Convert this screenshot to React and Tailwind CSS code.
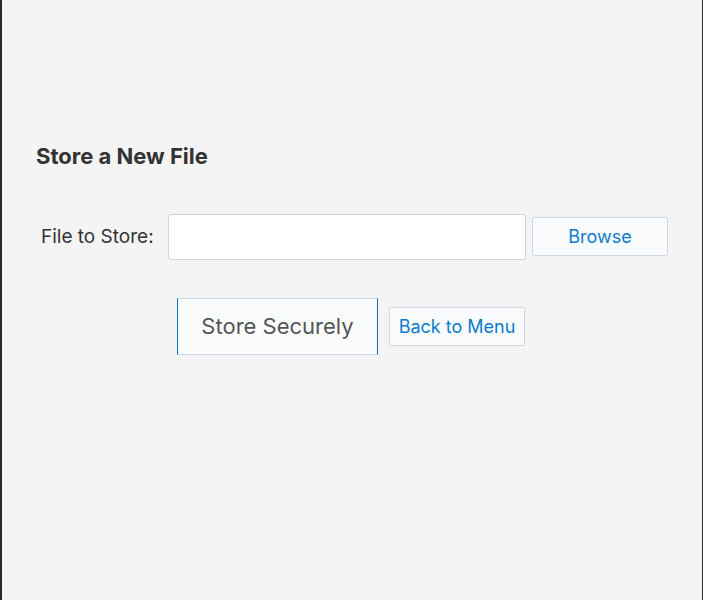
export default function App() {
  const font = { fontFamily: "Inter, 'Noto Sans', sans-serif" };
  return (
    <div
      className="h-[600px] w-[703px] bg-[#f4f4f4] border-l-2 border-r border-[#2b2b2b] flex flex-col"
      style={font}
    >
      <h1 className="mt-[142px] ml-[34px] text-[22px] font-bold text-[#333333] leading-[28px]">
        Store a New File
      </h1>

      <div className="mt-[44px] flex items-center">
        <label className="ml-[39px] w-[127px] text-[19px] text-[#333333]">File to Store:</label>
        <div className="h-[46px] w-[358px] rounded-[3px] border border-[#cdd3e3] bg-white" />
        <button className="ml-[6px] -mt-[1px] h-[39px] w-[136px] rounded-[2px] border border-[#d0d7e4] bg-[#f9fbfc] text-[18px] text-[#0b7bd1]">
          Browse
        </button>
      </div>

      <div className="mt-[38px] mr-[2px] flex items-center justify-center gap-[11px]">
        <button className="h-[57px] w-[201px] border border-t-[#c9d5e8] border-b-[#c9d5e8] border-l-[#0c6cc4] border-r-[#0c6cc4] bg-[#fafcfc] text-[22px] text-[#555555]">
          Store Securely
        </button>
        <button className="h-[39px] w-[136px] rounded-[2px] border border-[#d0d7e4] bg-[#f9fbfc] text-[18px] text-[#0b7bd1]">
          Back to Menu
        </button>
      </div>
    </div>
  );
}
